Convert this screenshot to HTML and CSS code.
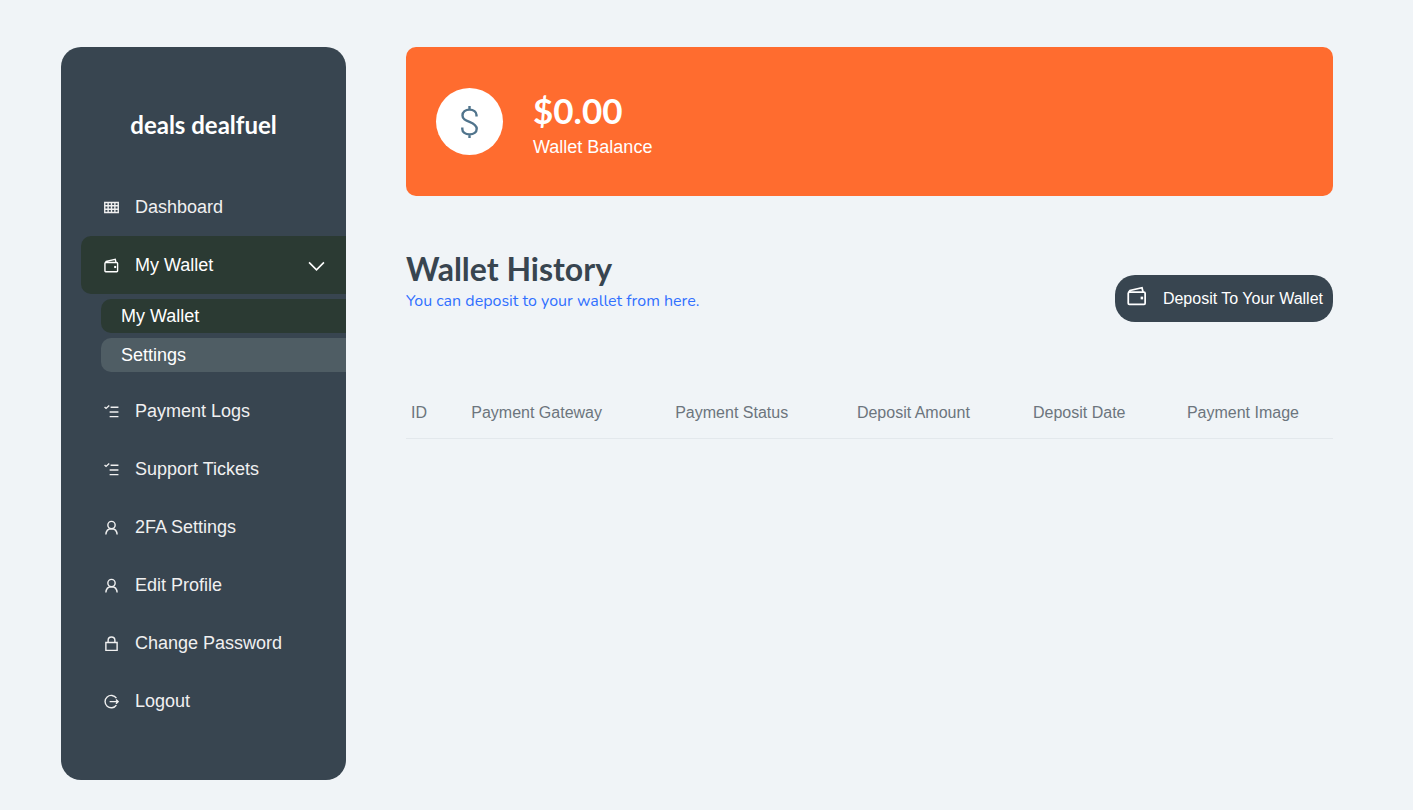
FILE: index.html
```html
<!DOCTYPE html>
<html lang="en">
<head>
<meta charset="utf-8">
<meta name="viewport" content="width=device-width, initial-scale=1">
<title>My Wallet</title>
<link rel="stylesheet" href="styles.css">
</head>
<body>
<svg class="sprite" aria-hidden="true">
  <symbol id="wallet" viewBox="0 0 16 16"><path d="M1 5.800q0-1 1-1h11.500q1 0 1 1v8q0 .8-.8.8H1.800q-.8 0-.8-.8zM1.200 5.200 2.400 3.600 12 1.400l.8 3.200"/><path d="M11.600 9.200h.6v.8h-.6z"/></symbol>
  <symbol id="list" viewBox="0 0 16 16"><path d="M.6 3.200l1.600 1.500L5.600 1.600M7 3.500h8.400M6 8.500h9.400M6 13.500h9.400"/></symbol>
  <symbol id="user" viewBox="0 0 16 16"><circle cx="8" cy="5.400" r="3.900"/><path d="M2 15.500c.2-3.600 2.400-6.200 6-6.200s5.800 2.600 6 6.200"/></symbol>
</svg>
<div class="page">
  <aside class="sidebar">
    <h2 class="brand">deals dealfuel</h2>
    <nav class="menu">
      <a class="item" href="#"><svg class="icon" viewBox="0 0 16 16"><path d="M.8 2.600h14.400v10.800H.8zM.8 6.200h14.400M.8 9.800h14.400M4.400 2.600v10.800M8 2.600v10.800M11.600 2.600v10.800"/></svg>Dashboard</a>
      <a class="item active" href="#"><svg class="icon"><use href="#wallet"/></svg>My Wallet<svg class="chevron" viewBox="0 0 16 16"><path d="M1 5l7 7 7-7"/></svg></a>
      <div class="submenu">
        <a class="subitem current" href="#">My Wallet</a>
        <a class="subitem" href="#">Settings</a>
      </div>
      <a class="item" href="#"><svg class="icon"><use href="#list"/></svg>Payment Logs</a>
      <a class="item" href="#"><svg class="icon"><use href="#list"/></svg>Support Tickets</a>
      <a class="item" href="#"><svg class="icon"><use href="#user"/></svg>2FA Settings</a>
      <a class="item" href="#"><svg class="icon"><use href="#user"/></svg>Edit Profile</a>
      <a class="item" href="#"><svg class="icon" viewBox="0 0 16 16"><path d="M2 7h12v8.300H2zM4.400 7V4.600a3.600 3.600 0 0 1 7.200 0V7"/></svg>Change Password</a>
      <a class="item" href="#"><svg class="icon" viewBox="0 0 16 16"><path d="M13.200 4.400a6.600 6.600 0 1 0 0 7.400M6 8.100h9M12.800 5.900l2.200 2.200-2.200 2.200"/></svg>Logout</a>
    </nav>
  </aside>
  <main class="main">
    <section class="balance">
      <div class="coin"><svg class="dollar" viewBox="0 0 20 34"><path d="M9.500 1v4M9.500 29v4M16.500 11.500V10C16.500 6.800 13.500 4.600 9.500 4.600S2.500 6.800 2.500 10.400c0 3.700 2.800 4.800 7 6.400 4.200 1.700 7.200 3.300 7.200 7 0 3.400-3 5.600-7.200 5.600s-7.200-2.200-7.200-5.400V22.500"/></svg></div>
      <div>
        <div class="amount">$0.00</div>
        <div class="label">Wallet Balance</div>
      </div>
    </section>
    <section class="history">
      <div>
        <h1 class="heading">Wallet History</h1>
        <p class="hint">You can deposit to your wallet from here.</p>
      </div>
      <button class="deposit" type="button"><svg class="deposit-icon"><use href="#wallet"/></svg>Deposit To Your Wallet</button>
    </section>
    <table class="payments">
      <thead>
        <tr><th class="c-id">ID</th><th class="c-gateway">Payment Gateway</th><th class="c-status">Payment Status</th><th class="c-amount">Deposit Amount</th><th class="c-date">Deposit Date</th><th>Payment Image</th></tr>
      </thead>
    </table>
  </main>
</div>
</body>
</html>
```
FILE: styles.css
```css
* { box-sizing: border-box; }
body {
  margin: 0;
  background: #f0f4f7;
  color: #384550;
  font-family: "Liberation Sans", Arial, sans-serif;
  font-size: 16px;
}
h1, h2, p { margin: 0; }
a { color: inherit; text-decoration: none; }
svg { fill: none; stroke: currentColor; flex: none; }
.sprite { position: absolute; width: 0; height: 0; }
.page {
  display: flex;
  align-items: flex-start;
  gap: 60px;
  padding: 47px 80px 30px 61px;
}
.sidebar {
  flex: 0 0 285px;
  padding: 60px 0 50px 20px;
  border-radius: 20px;
  background: #384550;
  color: #f0f0f0;
}
.brand {
  margin: 0 20px 35px 0;
  color: #fff;
  font: bold 24px/36px Lato, sans-serif;
  text-align: center;
}
.item {
  display: flex;
  align-items: center;
  height: 58px;
  padding: 0 21px 0 23px;
  border-radius: 10px 0 0 10px;
  font-size: 18px;
}
.active, .current { background: #2b3a33; color: #fff; }
.icon { width: 15px; height: 15px; margin-right: 16px; stroke-width: 1.5; }
.chevron { width: 17px; height: 17px; margin-left: auto; stroke-width: 1.5; }
.submenu {
  display: grid;
  gap: 5px;
  padding: 5px 0 10px 20px;
}
.subitem {
  padding: 0 20px;
  border-radius: 10px 0 0 10px;
  background: #4f5d64;
  color: #fff;
  font-size: 18px;
  line-height: 34px;
}
.subitem.current { background: #2b3a33; }
.main { flex: 1; min-width: 0; }
.balance {
  display: flex;
  align-items: center;
  gap: 30px;
  padding: 37px 30px;
  border-radius: 10px;
  background: #ff6c2f;
  color: #fff;
}
.coin {
  display: grid;
  place-items: center;
  width: 67px;
  height: 67px;
  border-radius: 50%;
  background: #fff;
  color: #50748c;
}
.dollar { width: 20px; height: 34px; stroke-width: 2.4; }
.amount { font: bold 35px/52px Lato, sans-serif; }
.label { font-size: 18px; line-height: 23px; }
.history {
  display: flex;
  justify-content: space-between;
  align-items: flex-end;
  padding-top: 52px;
}
.heading { font: bold 32px/42px Lato, sans-serif; }
.hint {
  padding-bottom: 10px;
  color: #3170ff;
  font: 16px/22px Nunito, Lato, sans-serif;
}
.deposit {
  display: flex;
  align-items: center;
  gap: 16px;
  height: 47px;
  padding: 0 10px 0 12px;
  border: 0;
  border-radius: 20px;
  background: #384550;
  color: #fff;
  font: 16px "Liberation Sans", Arial, sans-serif;
}
.deposit-icon { width: 20px; height: 20px; margin-bottom: 5px; stroke-width: 1.4; }
.payments {
  width: 100%;
  margin-top: 66px;
  border-collapse: collapse;
  table-layout: fixed;
  color: #6c757d;
}
.payments th {
  padding: 13px 5px;
  border-bottom: 1px solid #e3e8ec;
  font-weight: normal;
  line-height: 24px;
  text-align: left;
}
.c-id { width: 6.5%; }
.c-gateway { width: 22%; }
.c-status { width: 19.6%; }
.c-amount { width: 19%; }
.c-date { width: 16.6%; }
```
